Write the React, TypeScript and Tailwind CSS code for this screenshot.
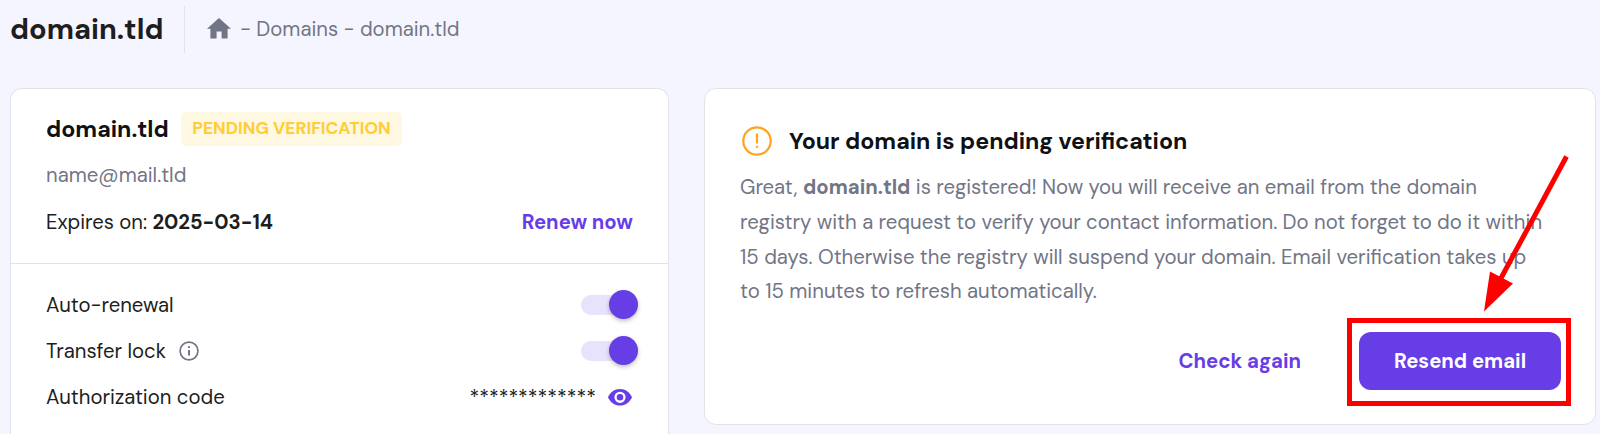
const BODY_LINES = [
  "registry with a request to verify your contact information. Do not forget to do it within",
  "15 days. Otherwise the registry will suspend your domain. Email verification takes up",
  "to 15 minutes to refresh automatically.",
]

function HomeIcon() {
  return (
    <svg width="24" height="21" viewBox="0 0 24 21" className="shrink-0 fill-[#727586]">
      <path d="M12 0 24 10.8H20.6V20.6H14.6V13.6H9.6V20.6H3.4V10.8H0Z" />
    </svg>
  )
}

function InfoIcon() {
  return (
    <svg width="20" height="20" viewBox="0 0 20 20" className="shrink-0" fill="none">
      <circle cx="10" cy="10" r="8.9" stroke="#727586" strokeWidth="1.7" />
      <path d="M10 9V14.5M10 5.3V7" stroke="#727586" strokeWidth="2" />
    </svg>
  )
}

function WarningIcon() {
  return (
    <svg width="30" height="30" viewBox="0 0 30 30" className="shrink-0" fill="none" stroke="#ffa31a">
      <circle cx="15" cy="15" r="13.7" strokeWidth="2.2" />
      <path d="M15 7.5V17.5M15 19.8V21.8" strokeWidth="2.2" />
    </svg>
  )
}

function EyeIcon() {
  return (
    <svg width="24" height="17" viewBox="0 0 24 17" className="shrink-0">
      <path
        className="fill-[#673de6]"
        fillRule="evenodd"
        d="M12 0C6.6 0 2 3.4 0 8.3 2 13.2 6.6 16.6 12 16.6S22 13.2 24 8.3C22 3.4 17.4 0 12 0ZM12 13.9A5.6 5.6 0 1 1 12 2.7 5.6 5.6 0 0 1 12 13.9ZM12 5A3.3 3.3 0 1 0 12 11.6 3.3 3.3 0 0 0 12 5Z"
      />
    </svg>
  )
}

function Toggle() {
  return (
    <span className="relative block h-5 w-[57px] rounded-full bg-[#e8e3fc]">
      <span className="absolute -top-[5px] right-0 size-[29px] rounded-full bg-[#673de6] shadow-[0_2px_4px_rgba(0,0,0,0.25)]" />
    </span>
  )
}

function Header() {
  return (
    <header className="flex h-[59px] items-center pl-[10px]">
      <h1 className="w-[174px] pt-px text-[29px] font-bold">domain.tld</h1>
      <span className="h-[47px] w-px bg-[#e2e2ec]" />
      <nav className="flex items-center pl-[22px] text-[#727586]">
        <span className="pb-[3px]">
          <HomeIcon />
        </span>
        <span className="pl-[9px]">- Domains - domain.tld</span>
      </nav>
    </header>
  )
}

function DomainCard() {
  return (
    <section className="h-[360px] w-[659px] rounded-t-xl border border-b-0 border-[#e2e2e8] bg-white">
      <div className="h-[175px] border-b border-[#e2e2e8] px-[35px] pt-[23px]">
        <div className="flex h-[34px] items-center">
          <h2 className="w-[135px] text-[23.2px] font-bold text-[#101114]">domain.tld</h2>
          <span className="flex h-[34px] w-[221px] items-center justify-center rounded-[5px] bg-[#fff8e2] pb-[2px] text-[17.4px] font-bold text-[#ffcd35]">
            PENDING VERIFICATION
          </span>
        </div>
        <p className="mt-[14px] leading-[30px] text-[#727586]">name@mail.tld</p>
        <div className="mt-[17px] flex justify-between leading-[30px]">
          <p>
            Expires on: <strong className="font-bold">2025-03-14</strong>
          </p>
          <a className="font-bold text-[#673de6]">Renew now</a>
        </div>
      </div>
      <div className="flex flex-col gap-[16px] pt-[26px] pr-[30px] pl-[35px] leading-[30px]">
        <div className="flex items-center justify-between">
          <span>Auto-renewal</span>
          <Toggle />
        </div>
        <div className="flex items-center justify-between">
          <span className="flex items-center gap-[13px]">
            Transfer lock
            <InfoIcon />
          </span>
          <Toggle />
        </div>
        <div className="flex items-center justify-between">
          <span>Authorization code</span>
          <span className="flex items-center gap-3 pr-[6px]">
            <span>*************</span>
            <EyeIcon />
          </span>
        </div>
      </div>
    </section>
  )
}

function VerificationCard() {
  return (
    <section className="h-[337px] w-[892px] rounded-xl border border-[#e2e2e8] bg-white pt-[37px] pl-[35px]">
      <div className="flex items-center gap-[17px] pl-[2px]">
        <WarningIcon />
        <h2 className="text-[23.2px] leading-[30px] font-bold text-[#101114]">Your domain is pending verification</h2>
      </div>
      <div className="mt-[14px] text-[20.32px] leading-[34.8px] whitespace-nowrap text-[#727586]">
        <p>
          Great, <strong className="font-bold">domain.tld</strong> is registered! Now you will receive an email from the domain
        </p>
        {BODY_LINES.map(line => (
          <p key={line}>{line}</p>
        ))}
      </div>
      <div className="mt-[8.8px] flex items-center justify-end pr-[24px]">
        <a className="mr-[46px] pb-px font-bold text-[#673de6]">Check again</a>
        {/* Highlighted action */}
        <div className="flex h-[88px] w-[224px] items-center border-[5px] border-[#f00] pb-px pl-[7px]">
          <button className="h-[58px] w-[202px] rounded-xl bg-[#673de6] font-bold text-white">Resend email</button>
        </div>
      </div>
    </section>
  )
}

export default function App() {
  return (
    <main className="relative h-[434px] w-[1600px] overflow-hidden bg-[#f4f5ff] font-['DM_Sans',Inter,sans-serif] text-[20.3px] text-[#1d1e20]">
      <Header />
      <div className="mt-[29px] flex items-start gap-[35px] pl-[10px]">
        <DomainCard />
        <VerificationCard />
      </div>
      {/* Arrow pointing at the resend button */}
      <svg className="absolute top-[150px] left-[1470px]" width="110" height="170" viewBox="1470 150 110 170">
        <path d="M1566.500 156.500 1500 280" stroke="#f00" strokeWidth="5" />
        <path d="M1484 311.500 1490 271.500 1513 283.500Z" fill="#f00" />
      </svg>
    </main>
  )
}
